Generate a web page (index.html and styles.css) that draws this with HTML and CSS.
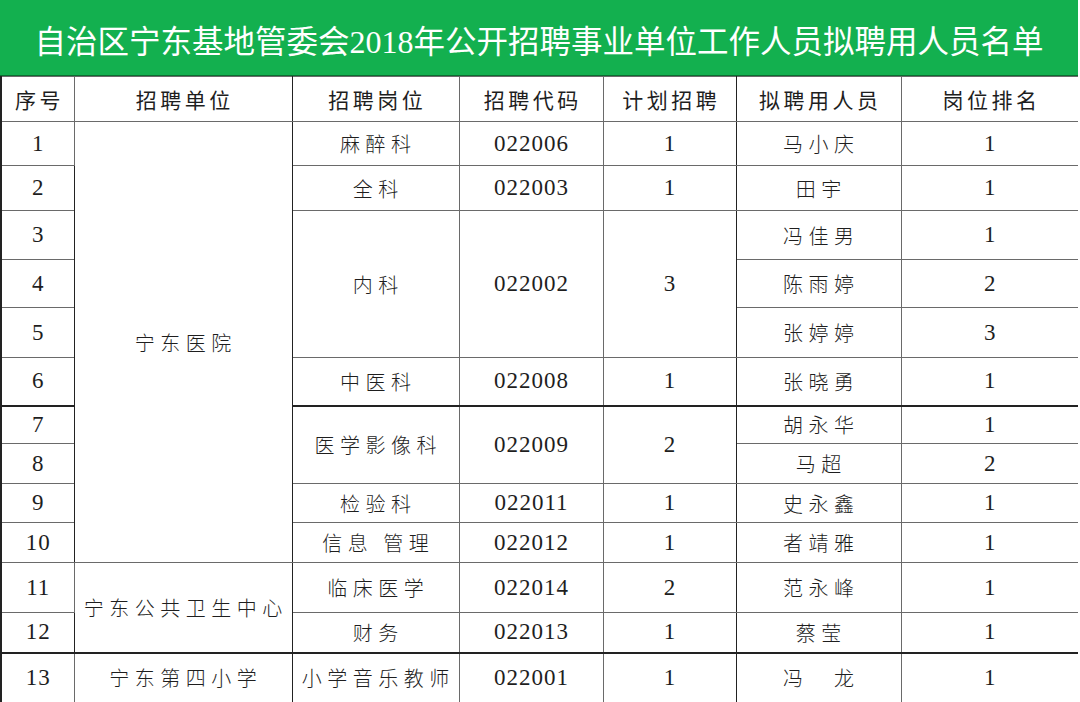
FILE: index.html
```html
<!DOCTYPE html>
<html lang="zh-CN">
<head>
<meta charset="utf-8">
<title>拟聘用人员名单</title>
<link rel="stylesheet" href="styles.css">
</head>
<body>
<div class="page">
  <div class="banner"><span class="ttl">自治区宁东基地管委会<span class="yr">2018</span>年公开招聘事业单位工作人员拟聘用人员名单</span></div>
  <table class="roster">
    <colgroup>
      <col class="c1"><col class="c2"><col class="c3"><col class="c4"><col class="c5"><col class="c6"><col class="c7">
    </colgroup>
    <thead>
      <tr class="h-head">
        <th class="cn-h bl">序号</th>
        <th class="cn-h bk">招聘单位</th>
        <th class="cn-h">招聘岗位</th>
        <th class="cn-h">招聘代码</th>
        <th class="cn-h bk">计划招聘</th>
        <th class="cn-h">拟聘用人员</th>
        <th class="cn-h bk br">岗位排名</th>
      </tr>
    </thead>
    <tbody>
      <tr class="h44">
        <td class="num bl">1</td>
        <td class="cn bk" rowspan="10">宁东医院</td>
        <td class="cn">麻醉科</td>
        <td class="num">022006</td>
        <td class="num bk">1</td>
        <td class="cn">马小庆</td>
        <td class="num bk br">1</td>
      </tr>
      <tr class="h45">
        <td class="num bl">2</td>
        <td class="cn">全科</td>
        <td class="num">022003</td>
        <td class="num bk">1</td>
        <td class="cn">田宇</td>
        <td class="num bk br">1</td>
      </tr>
      <tr class="h49">
        <td class="num bl">3</td>
        <td class="cn" rowspan="3">内科</td>
        <td class="num" rowspan="3">022002</td>
        <td class="num bk" rowspan="3">3</td>
        <td class="cn">冯佳男</td>
        <td class="num bk br">1</td>
      </tr>
      <tr class="h48">
        <td class="num bl">4</td>
        <td class="cn">陈雨婷</td>
        <td class="num bk br">2</td>
      </tr>
      <tr class="h50">
        <td class="num bl">5</td>
        <td class="cn">张婷婷</td>
        <td class="num bk br">3</td>
      </tr>
      <tr class="h48">
        <td class="num bl">6</td>
        <td class="cn">中医科</td>
        <td class="num">022008</td>
        <td class="num bk">1</td>
        <td class="cn">张晓勇</td>
        <td class="num bk br">1</td>
      </tr>
      <tr class="h38 thick">
        <td class="num bl">7</td>
        <td class="cn" rowspan="2">医学影像科</td>
        <td class="num" rowspan="2">022009</td>
        <td class="num bk" rowspan="2">2</td>
        <td class="cn">胡永华</td>
        <td class="num bk br">1</td>
      </tr>
      <tr class="h40">
        <td class="num bl">8</td>
        <td class="cn">马超</td>
        <td class="num bk br">2</td>
      </tr>
      <tr class="h39">
        <td class="num bl">9</td>
        <td class="cn">检验科</td>
        <td class="num">022011</td>
        <td class="num bk">1</td>
        <td class="cn">史永鑫</td>
        <td class="num bk br">1</td>
      </tr>
      <tr class="h40">
        <td class="num bl">10</td>
        <td class="cn">信息 管理</td>
        <td class="num">022012</td>
        <td class="num bk">1</td>
        <td class="cn">者靖雅</td>
        <td class="num bk br">1</td>
      </tr>
      <tr class="h50 dark">
        <td class="num bl">11</td>
        <td class="cn bk" rowspan="2">宁东公共卫生中心</td>
        <td class="cn">临床医学</td>
        <td class="num">022014</td>
        <td class="num bk">2</td>
        <td class="cn">范永峰</td>
        <td class="num bk br">1</td>
      </tr>
      <tr class="h40">
        <td class="num bl">12</td>
        <td class="cn">财务</td>
        <td class="num">022013</td>
        <td class="num bk">1</td>
        <td class="cn">蔡莹</td>
        <td class="num bk br">1</td>
      </tr>
      <tr class="h50 thick">
        <td class="num bl">13</td>
        <td class="cn bk">宁东第四小学</td>
        <td class="cn">小学音乐教师</td>
        <td class="num">022001</td>
        <td class="num bk">1</td>
        <td class="cn">冯　龙</td>
        <td class="num bk br">1</td>
      </tr>
    </tbody>
  </table>
</div>
</body>
</html>
```
FILE: styles.css
```css
html, body {
  margin: 0;
  padding: 0;
  background: #ffffff;
}

.page {
  width: 1078px;
  height: 702px;
  overflow: hidden;
}

.banner {
  height: 76px;
  background: #13b04f;
  color: #ffffff;
  display: flex;
  align-items: center;
  justify-content: center;
  box-sizing: border-box;
  padding-top: 3px;
  border-bottom: 1px solid #0b6d30;
  white-space: nowrap;
}

.ttl {
  font-family: "Noto Sans CJK SC", sans-serif;
  font-size: 31.5px;
  font-weight: 400;
  letter-spacing: 0;
}

.yr {
  font-family: "Liberation Serif", serif;
  font-size: 32px;
  letter-spacing: 0;
}

.roster {
  width: 1078px;
  table-layout: fixed;
  border-collapse: collapse;
  color: #1e1e1e;
}

.c1 { width: 73px; }
.c2 { width: 218px; }
.c3 { width: 167px; }
.c4 { width: 144px; }
.c5 { width: 133px; }
.c6 { width: 165px; }
.c7 { width: 178px; }

.roster th,
.roster td {
  border: 1px solid #6a6a6a;
  padding: 0;
  text-align: center;
  vertical-align: middle;
  white-space: nowrap;
}

.roster .bk { border-left-color: #222; border-right-color: #222; }
.roster .bl { border-left: 2px solid #222; }
.roster .br { border-right: 2px solid #222; }

.cn-h {
  font-family: "Noto Sans CJK SC", sans-serif;
  font-weight: 400;
  font-size: 21px;
  letter-spacing: 3.5px;
  padding-left: 3.5px !important;
}

.cn {
  font-family: "Noto Sans CJK SC", sans-serif;
  font-weight: 300;
  font-size: 20px;
  letter-spacing: 5.5px;
  padding-left: 5.5px !important;
}

.num {
  font-family: "Liberation Serif", serif;
  font-size: 23px;
  letter-spacing: 1px;
  padding-left: 1px !important;
}

.h-head { height: 45px; }
.h38 { height: 38px; }
.h39 { height: 39px; }
.h40 { height: 40px; }
.h44 { height: 44px; }
.h45 { height: 45px; }
.h48 { height: 48px; }
.h49 { height: 49px; }
.h50 { height: 50px; }

.thick td { border-top: 2px solid #222; }
.dark td { border-top: 1px solid #222; }
```
